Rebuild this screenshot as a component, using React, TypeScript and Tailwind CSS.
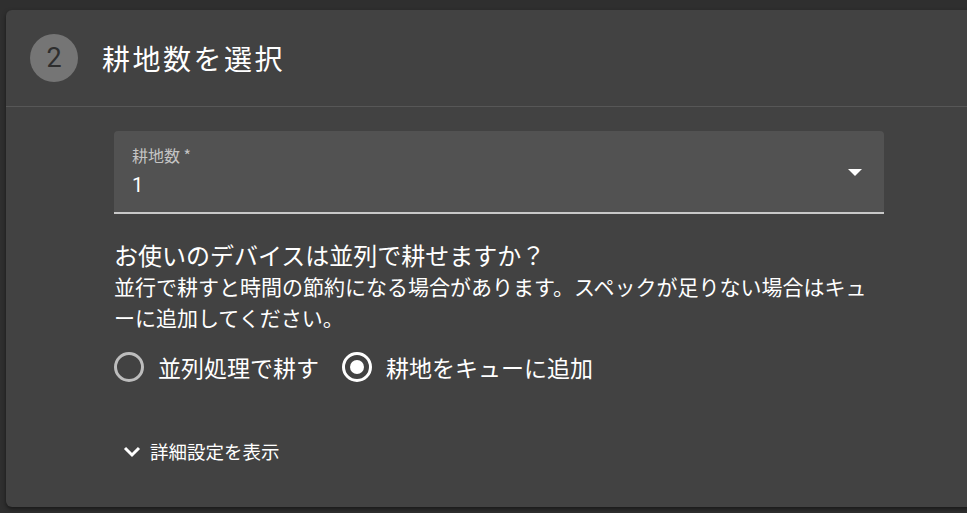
import React from "react";

const font = { fontFamily: '"Noto Sans CJK JP", "Noto Sans", sans-serif' };

function Radio({ checked }: { checked: boolean }) {
  return (
    <svg width="30" height="30" viewBox="0 0 30 30">
      <circle cx="15" cy="15" r="13.5" fill="none" stroke={checked ? "#ffffff" : "#bdbdbd"} strokeWidth="3" />
      {checked && <circle cx="15" cy="15" r="7" fill="#ffffff" />}
    </svg>
  );
}

export default function App() {
  return (
    <div className="w-[967px] h-[513px] overflow-hidden bg-[#2f2f2f] pt-[10px] pl-[6px]" style={font}>
      <div className="w-[980px] h-[497px] rounded-md bg-[#424242] shadow-[0_2px_4px_rgba(0,0,0,0.5)]">
        <div className="h-[97px] flex items-center pl-[24px] border-b border-[#575757]">
          <div className="w-[48px] h-[48px] rounded-full bg-[#757575] flex items-center justify-center text-[27px] text-[#2e2e2e]" style={{ fontFamily: 'Roboto, sans-serif' }}>
            2
          </div>
          <div className="ml-[24px] text-[28px] text-white tracking-[2.5px]">耕地数を選択</div>
        </div>
        <div className="ml-[108px] w-[770px] pt-[24px]">
          <div className="h-[83px] rounded-t bg-[#525252] border-b-2 border-[#c8c8c8] relative pl-[18px]">
            <div className="pt-[13px] text-[16px] leading-[22px] text-[#c4c4c4]">耕地数 *</div>
            <div className="mt-[6px] text-[20px] leading-[26px] text-white" style={{ fontFamily: 'Roboto, sans-serif' }}>1</div>
            <svg className="absolute right-[22px] top-[38px]" width="14" height="8" viewBox="0 0 14 8">
              <path d="M0 0 L14 0 L7 7 Z" fill="#ffffff" />
            </svg>
          </div>
          <div className="mt-[25px] text-[24px] leading-[32px] text-white">お使いのデバイスは並列で耕せますか？</div>
          <div className="text-[21px] leading-[31px] text-white">
            並行で耕すと時間の節約になる場合があります。スペックが足りない場合はキューに追加してください。
          </div>
          <div className="mt-[17px] flex items-center h-[34px]">
            <Radio checked={false} />
            <span className="ml-[14px] text-[23px] text-white">並列処理で耕す</span>
            <span className="ml-[23px]"><Radio checked={true} /></span>
            <span className="ml-[14px] text-[23px] text-white">耕地をキューに追加</span>
          </div>
          <div className="mt-[54px] flex items-center ml-[9px]">
            <svg width="18" height="12" viewBox="0 0 18 12">
              <path d="M2 2 L9 9 L16 2" fill="none" stroke="#ffffff" strokeWidth="3" />
            </svg>
            <span className="ml-[9px] text-[18.5px] text-white">詳細設定を表示</span>
          </div>
        </div>
      </div>
    </div>
  );
}
